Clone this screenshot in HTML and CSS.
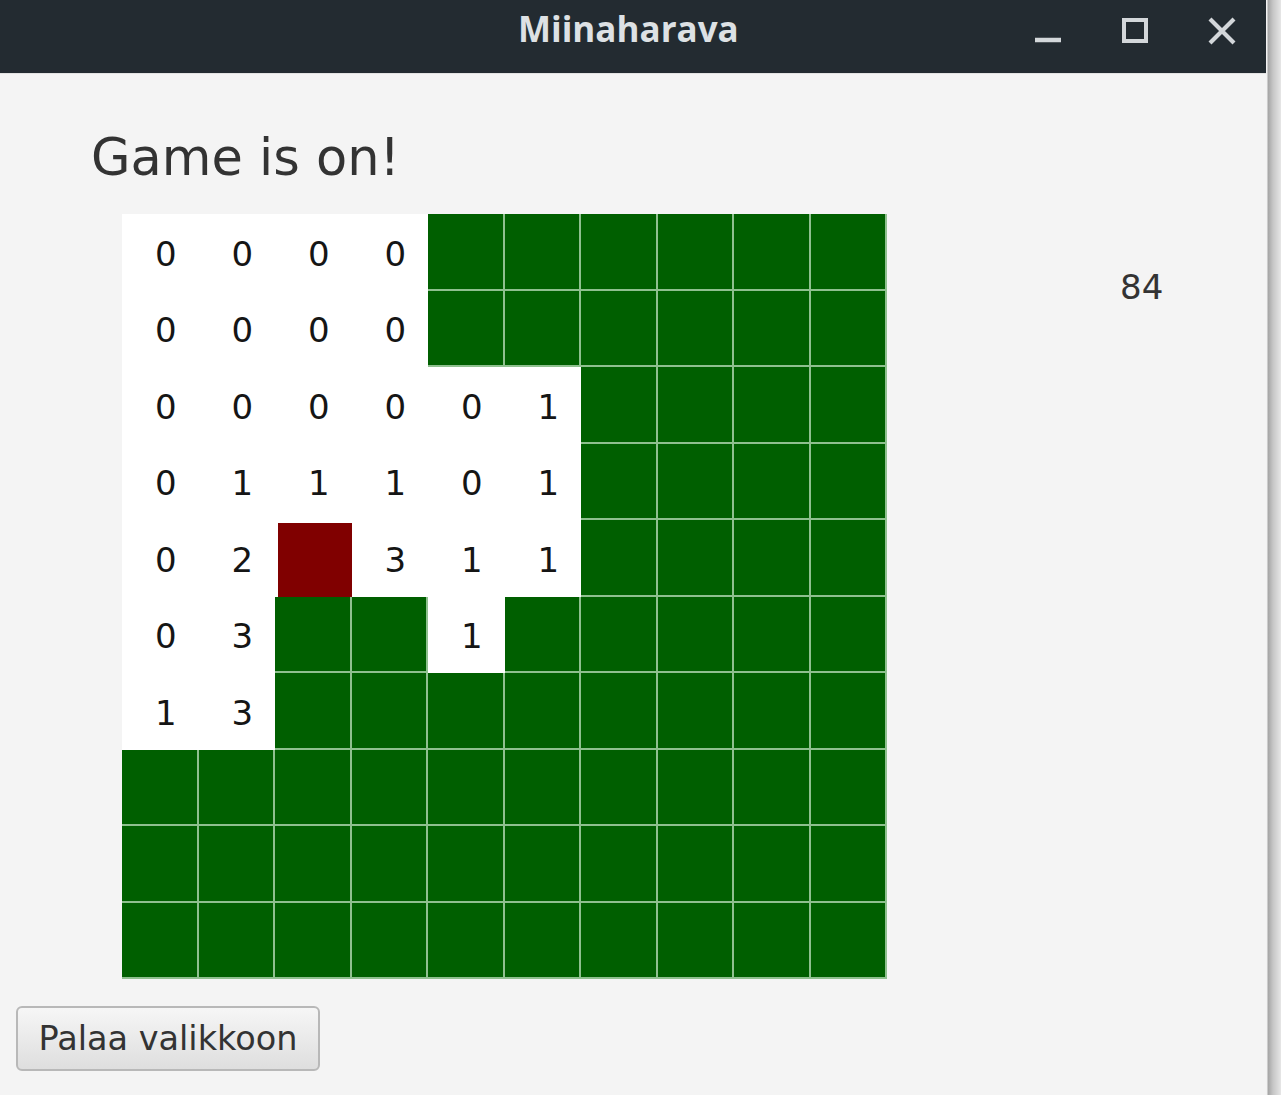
FILE: index.html
```html
<!DOCTYPE html>
<html lang="fi">
<head>
<meta charset="utf-8">
<title>Miinaharava</title>
<link rel="stylesheet" href="styles.css">
</head>
<body>
<div class="window">
  <div class="titlebar">
    <div class="title">Miinaharava</div>
    <div class="controls">
      <svg class="ctl" width="28" height="28" viewBox="0 0 28 28"><line x1="1" y1="23" x2="27" y2="23" stroke="#d3d7da" stroke-width="4.5"/></svg>
      <svg class="ctl" width="28" height="28" viewBox="0 0 28 28"><rect x="3" y="3" width="22" height="21" fill="none" stroke="#d3d7da" stroke-width="4"/></svg>
      <svg class="ctl" width="28" height="28" viewBox="0 0 28 28"><path d="M2 2 L26 26 M26 2 L2 26" stroke="#d3d7da" stroke-width="4.2" fill="none"/></svg>
    </div>
  </div>
  <div class="content">
    <div class="heading">Game is on!</div>
    <div class="board-row">
      <div class="grid">
        <div class="c">0</div><div class="c">0</div><div class="c">0</div><div class="c">0</div><div class="g"></div><div class="g"></div><div class="g"></div><div class="g"></div><div class="g"></div><div class="g"></div>
        <div class="c">0</div><div class="c">0</div><div class="c">0</div><div class="c">0</div><div class="g"></div><div class="g"></div><div class="g"></div><div class="g"></div><div class="g"></div><div class="g"></div>
        <div class="c">0</div><div class="c">0</div><div class="c">0</div><div class="c">0</div><div class="c">0</div><div class="c">1</div><div class="g"></div><div class="g"></div><div class="g"></div><div class="g"></div>
        <div class="c">0</div><div class="c">1</div><div class="c">1</div><div class="c">1</div><div class="c">0</div><div class="c">1</div><div class="g"></div><div class="g"></div><div class="g"></div><div class="g"></div>
        <div class="c">0</div><div class="c">2</div><div class="r"></div><div class="c">3</div><div class="c">1</div><div class="c">1</div><div class="g"></div><div class="g"></div><div class="g"></div><div class="g"></div>
        <div class="c">0</div><div class="c">3</div><div class="g"></div><div class="g"></div><div class="c">1</div><div class="g"></div><div class="g"></div><div class="g"></div><div class="g"></div><div class="g"></div>
        <div class="c">1</div><div class="c">3</div><div class="g"></div><div class="g"></div><div class="g"></div><div class="g"></div><div class="g"></div><div class="g"></div><div class="g"></div><div class="g"></div>
        <div class="g"></div><div class="g"></div><div class="g"></div><div class="g"></div><div class="g"></div><div class="g"></div><div class="g"></div><div class="g"></div><div class="g"></div><div class="g"></div>
        <div class="g"></div><div class="g"></div><div class="g"></div><div class="g"></div><div class="g"></div><div class="g"></div><div class="g"></div><div class="g"></div><div class="g"></div><div class="g"></div>
        <div class="g"></div><div class="g"></div><div class="g"></div><div class="g"></div><div class="g"></div><div class="g"></div><div class="g"></div><div class="g"></div><div class="g"></div><div class="g"></div>
      </div>
      <div class="count">84</div>
    </div>
    <button class="btn">Palaa valikkoon</button>
  </div>
</div>
<div class="shadow"></div>
</body>
</html>
```
FILE: styles.css
```css
html, body {
  margin: 0;
  padding: 0;
}
body {
  display: flex;
  height: 1095px;
  overflow: hidden;
  background: #f4f4f4;
  font-family: "DejaVu Sans", "Liberation Sans", sans-serif;
}
.window {
  width: 1266px;
  display: flex;
  flex-direction: column;
  background: #f4f4f4;
}
.shadow {
  flex: 1;
  background: linear-gradient(to right, #f2f2f2 0, #f2f2f2 1px, #a4a4a4 2px, #c6c6c6 7px, #e6e6e6 15px);
}
.titlebar {
  height: 73px;
  background: #232b31;
  display: flex;
  align-items: flex-start;
  border-bottom: 1px solid #e2e2e2;
  flex-shrink: 0;
}
.title {
  padding-left: 518px;
  padding-top: 4px;
  font-family: "Open Sans", "DejaVu Sans", sans-serif;
  font-weight: 700;
  font-size: 35px;
  line-height: 50px;
  color: #dde1e4;
}
.controls {
  margin-left: auto;
  padding-top: 17px;
  padding-right: 30px;
  display: flex;
  gap: 59px;
}
.ctl {
  display: block;
}
.content {
  flex: 1;
  display: flex;
  flex-direction: column;
  align-items: flex-start;
}
.heading {
  margin: 54px 0 0 91px;
  font-size: 51px;
  line-height: 60px;
  color: #333333;
}
.board-row {
  display: flex;
  align-items: flex-start;
  margin: 26px 0 0 122px;
}
.grid {
  display: grid;
  grid-template-columns: repeat(10, 76.5px);
  grid-template-rows: repeat(10, 76.5px);
  background: #ffffff;
}
.c {
  display: flex;
  align-items: center;
  justify-content: center;
  padding-left: 11px;
  padding-top: 3px;
  font-size: 34px;
  color: #151515;
  background: #ffffff;
}
.g {
  box-sizing: border-box;
  background: #005f00;
  border-right: 2.5px solid #8fc08f;
  border-bottom: 2.5px solid #8fc08f;
}
.r {
  box-sizing: border-box;
  background: #800000;
  border-left: 3px solid #ffffff;
  border-top: 3px solid #ffffff;
}
.count {
  margin: 53px 0 0 233px;
  font-size: 34px;
  line-height: 40px;
  color: #333333;
}
.btn {
  margin: 27px 0 0 16px;
  width: 304px;
  height: 65px;
  padding: 0;
  font-family: "DejaVu Sans", "Liberation Sans", sans-serif;
  font-size: 33.5px;
  color: #333333;
  border: 2px solid #b8b8b8;
  border-radius: 6px;
  background: linear-gradient(to bottom, #f6f6f6, #dedede);
}
```
